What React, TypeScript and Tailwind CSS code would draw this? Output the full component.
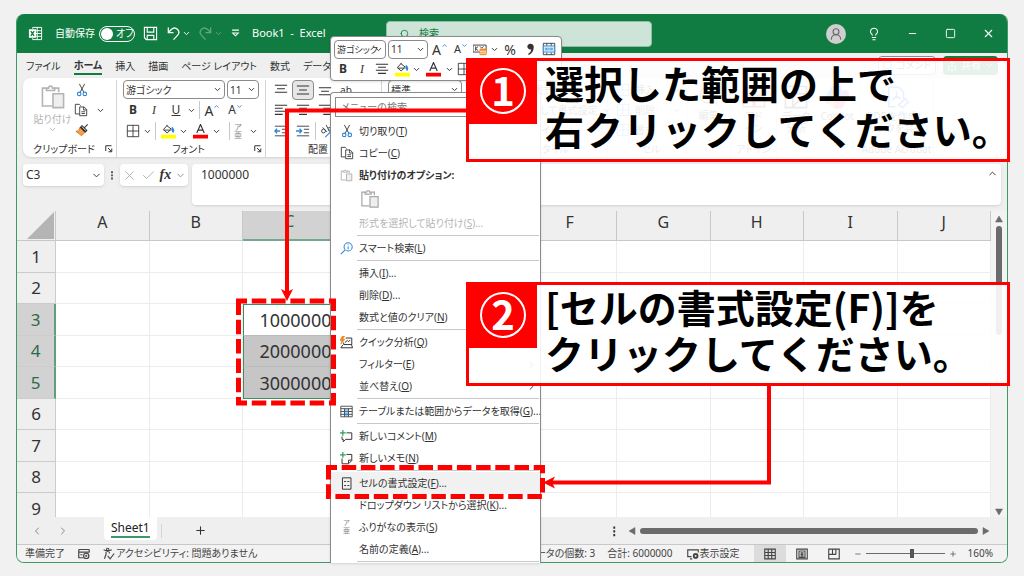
import type { ReactNode } from "react";
import {
  Check,
  ChevronDown,
  ChevronLeft,
  ChevronRight,
  ChevronUp,
  Lightbulb,
  MessageSquare,
  Minus,
  Plus,
  Search,
  Share,
  Square,
  UserRound,
  X,
} from "lucide-react";

const COLUMNS = ["A", "B", "C", "D", "E", "F", "G", "H", "I", "J"];
const ROWS = [1, 2, 3, 4, 5, 6, 7, 8, 9];
const VALUES: Record<number, string> = { 3: "1000000", 4: "2000000", 5: "3000000" };
const TABS = ["ファイル", "ホーム", "挿入", "描画", "ページ レイアウト", "数式", "データ"];

interface SvgProps {
  children: ReactNode;
  className?: string;
}

function Svg({ children, className = "size-4" }: SvgProps) {
  return (
    <svg viewBox="0 0 16 16" fill="none" stroke="currentColor" className={`shrink-0 ${className}`} aria-hidden="true">
      {children}
    </svg>
  );
}

const ExcelIcon = () => (
  <Svg className="size-[15px]">
    <path d="M5 3V1.5h9.5v13H5V13M9.8 1.5v13M5 5h9.500M5 8h9.500M5 11h9.500" />
    <path d="M1 3.500h7.500v9H1z" fill="#fff" stroke="none" />
    <path d="M3 5.500l3.500 5M6.500 5.500L3 10.500" stroke="#107c41" strokeWidth="1.500" />
  </Svg>
);

const SaveIcon = () => (
  <Svg className="size-[15px]">
    <path d="M1.500 1.500h13v13h-11l-2-2zM4.500 1.500v5h7v-5M4.500 14.500V10h7v4.500" strokeWidth="1.200" />
  </Svg>
);

const UndoIcon = ({ className = "" }: { className?: string }) => (
  <Svg className={`size-[15px] ${className}`}>
    <path d="M2.500 1.500v5.500H8M2.500 7l3.500-3.500a4.500 4.500 0 0 1 6.500 6.200L8 14.500" strokeWidth="1.400" />
  </Svg>
);

const ScissorsIcon = () => (
  <Svg className="size-[14px]">
    <path d="M5 1l5 9.500M11 1L6 10.500" />
    <g stroke="#2b88d8" strokeWidth="1.300">
      <circle cx="4.800" cy="12.500" r="2" />
      <circle cx="11.200" cy="12.500" r="2" />
    </g>
  </Svg>
);

const CopyIcon = () => (
  <Svg className="size-[14px]">
    <path d="M6 12.500H1.500v-11H6l1.500 1.500" />
    <path d="M6.500 4.500h5l3 3v7h-8zM11 4.500V8h3.500M8.500 10h4M8.500 12h4" />
  </Svg>
);

function PasteIcon({ className = "size-4" }: { className?: string }) {
  return (
    <Svg className={className}>
      <path d="M7.500 13.500h-6v-11H4M9 2.500h2.500V5" />
      <path d="M4 4V2.500h1.300a1.200 1.200 0 0 1 2.400 0H9V4z" />
      <path d="M8 6h6.500v8.500H8z" fill="#efefef" />
    </Svg>
  );
}

const BrushIcon = () => (
  <Svg className="size-[14px]">
    <path d="M14.500 1.500L10.500 5.500M6.500 4l6 6M8 3l5.500 5.500-2 2L6 5z" strokeWidth="1.200" />
    <path d="M5.500 5.500L11 11l-3.500 3.500L1 9.500l3-.5z" fill="#f5a04c" stroke="#d8731c" />
  </Svg>
);

const BordersIcon = () => (
  <Svg className="size-[14px]">
    <path d="M1.500 1.500h13v13h-13zM8 1.500v13M1.500 8h13" />
  </Svg>
);

const FillIcon = () => (
  <Svg className="size-[15px]">
    <path d="M7 1L2.500 6l4 3.500L11 5.500 6 1.500M3 6.500h7" />
    <path d="M12 3.500q3 3 1 5.500-2-1 -1-5.500z" fill="#2b88d8" stroke="#2b88d8" />
    <path d="M0 11.500h16v4H0z" fill="#ffff00" stroke="none" />
  </Svg>
);

const FontColorIcon = () => (
  <Svg className="size-[15px]">
    <path d="M4 9.500l4-9 4 9M5.300 6.500h5.400" strokeWidth="1.200" />
    <path d="M0 11.500h16v4H0z" fill="#ff0000" stroke="none" />
  </Svg>
);

const LauncherIcon = () => (
  <Svg className="size-[8px]">
    <path d="M1.500 12V1.500H13M6 6l7 7M13.500 7v6.500H7" strokeWidth="2" />
  </Svg>
);

function AlignIcon({ d }: { d: string }) {
  return (
    <Svg className="size-[14px]">
      <path d={d} strokeWidth="1.200" />
    </Svg>
  );
}

function IndentIcon({ flip = false }: { flip?: boolean }) {
  return (
    <Svg className="size-[14px]">
      <path d="M1 2.500h14M9 6h6M9 10h6M1 13.500h14" />
      <path d={flip ? "M0 8h6M4 5.500L6.500 8 4 10.500" : "M1 8h6M3.500 5.500L1 8l2.500 2.500"} stroke="#2b88d8" strokeWidth="1.500" />
    </Svg>
  );
}

const OrientationIcon = () => (
  <Svg className="size-[14px]">
    <circle cx="4" cy="8" r="2.200" />
    <path d="M3 4l5 5M7 1l3.500 7M9 5a2 2 0 1 1 1 3" />
    <path d="M6 15l8-8M14 11V7h-4" stroke="#2b88d8" strokeWidth="1.300" />
  </Svg>
);

const PhoneticIcon = ({ className = "text-[8px]" }: { className?: string }) => (
  <span className={`flex flex-col items-center leading-[8px] text-[#8a8a8a] ${className}`}>
    <span>ア</span>
    <span>亜</span>
  </span>
);

const CurrencyIcon = () => (
  <Svg className="size-[14px]">
    <path d="M0 3.500h15v8H0zM3 5v5M3 7.500L6 5M3 7.500L6 10M8 5l2 2 2-2" />
    <path d="M8 8h7v6.500H8z" fill="#f08a24" stroke="#f08a24" />
    <path d="M8 10.500h7M8 12.700h7" stroke="#fff" />
  </Svg>
);

const MergeIcon = () => (
  <Svg className="size-[14px]">
    <path d="M1.500 1.500h13v13h-13zM5.500 1.500v3M10.500 1.500v3M5.500 12v2.500M10.500 12v2.500" />
    <path d="M1.500 4.500h13v7h-13z" fill="#cfe7fa" stroke="#2b88d8" />
    <path d="M4 8h8M5.500 6.500L4 8l1.500 1.500M10.500 6.500L12 8l-1.500 1.500" stroke="#2b88d8" />
  </Svg>
);

const SmartIcon = () => (
  <Svg className="size-[13px]">
    <g stroke="#2b88d8" strokeWidth="1.300">
      <circle cx="10" cy="6" r="5" />
      <path d="M6 10l-5 5M10 5.500V9M10 3v1" />
    </g>
  </Svg>
);

const QuickIcon = () => (
  <Svg className="size-[13px]">
    <path d="M7 2.500h7.500v8H4.500V8M3.500 11L1 14.500h14.500l-1.500-4M6 8l3-2.500 1.500 1.500 2-2" strokeWidth="1.200" />
    <path d="M3 0L0 5.500h2.500L1 10l5-6H3.500L5.500 0z" fill="#f08a24" stroke="#f08a24" />
  </Svg>
);

const TableIcon = () => (
  <Svg className="size-[13px]">
    <path d="M5.500 5h5v9h-5z" fill="#9fd0f5" stroke="none" />
    <path d="M1 1.500h14v13H1zM1 4.500h14M1 8h14M1 11.500h14M5.500 4.500v10M10.500 4.500v10" />
    <path d="M5.500 8h5M5.500 11.500h5" stroke="#2b88d8" />
  </Svg>
);

const NewCommentIcon = () => (
  <Svg className="size-[13px]">
    <path d="M8 3.500h6.500v8H7l-3 3v-3H2.500V8" strokeWidth="1.200" />
    <path d="M3.500 0v7M0 3.500h7" stroke="#2e9e5b" strokeWidth="1.500" />
  </Svg>
);

const NewNoteIcon = () => (
  <Svg className="size-[13px]">
    <path d="M8 3h6.500v7.500l-4 4H2.500V8M10.500 14v-4h4" strokeWidth="1.200" />
    <path d="M3.500 0v7M0 3.500h7" stroke="#2e9e5b" strokeWidth="1.500" />
  </Svg>
);

const FormatCellsIcon = () => (
  <Svg className="size-[13px]">
    <path d="M3 1h10.500v14H3zM5 5.500h2.500M9 5.500h2.500M5 10.500h2.500M9 10.500h2.500" strokeWidth="1.200" />
  </Svg>
);

const Caret = () => <ChevronDown className="size-[9px] shrink-0" strokeWidth={2.5} aria-hidden="true" />;

interface ToolProps {
  label: string;
  children: ReactNode;
  className?: string;
}

function Tool({ label, children, className = "w-5" }: ToolProps) {
  return (
    <button aria-label={label} className={`flex h-5 shrink-0 items-center justify-center ${className}`}>
      {children}
    </button>
  );
}

function Dropdown({ label, value, className }: { label: string; value: string; className: string }) {
  return (
    <div className={`relative h-[19px] shrink-0 ${className}`}>
      <select
        aria-label={label}
        className="block size-full appearance-none rounded border border-[#8a8a8a] bg-white px-[2px] leading-none"
      >
        <option>{value}</option>
      </select>
      <span className="pointer-events-none absolute top-[5px] right-[3px]">
        <Caret />
      </span>
    </div>
  );
}

interface GroupProps {
  title: string;
  className: string;
  launcher?: boolean;
  children: ReactNode;
}

function Group({ title, className, launcher, children }: GroupProps) {
  return (
    <section className={`flex shrink-0 flex-col border-r border-[#d4d4d4] ${className}`} aria-label={title}>
      <div className="h-[62px]">{children}</div>
      <div className="flex h-[14px] items-center">
        <h2 className="flex-1 text-center text-[10px] leading-[14px]">{title}</h2>
        {launcher && (
          <button aria-label={`${title}の設定`} className="mr-[3px]">
            <LauncherIcon />
          </button>
        )}
      </div>
    </section>
  );
}

const Split = ({ className = "mx-px" }: { className?: string }) => (
  <span className={`h-[18px] w-px shrink-0 bg-[#c8c8c8] ${className}`} />
);

function TitleBar() {
  return (
    <header className="flex h-[39px] shrink-0 items-center bg-[#107c41] text-white">
      <div className="flex w-[369px] shrink-0 items-center pl-[11px]">
        <ExcelIcon />
        <span className="ml-3 text-[10px]">自動保存</span>
        <button
          role="switch"
          aria-checked="false"
          aria-label="自動保存"
          className="ml-1 flex h-4 w-9 items-center gap-[3px] rounded-full border border-white pl-px text-[10px] whitespace-nowrap"
        >
          <span className="size-3 shrink-0 rounded-full bg-white" />
          オフ
        </button>
        <button aria-label="上書き保存" className="ml-2">
          <SaveIcon />
        </button>
        <button aria-label="元に戻す" className="ml-2 flex items-center gap-px">
          <UndoIcon />
          <Caret />
        </button>
        <button aria-label="やり直し" className="ml-[7px] flex items-center gap-px text-[#5fa880]">
          <UndoIcon className="-scale-x-100" />
          <Caret />
        </button>
        <button aria-label="クイック アクセス ツール バー" className="ml-2">
          <Svg className="size-[9px]">
            <path d="M2 2h12M3 7h10l-5 5z" strokeWidth="1.800" />
          </Svg>
        </button>
        <h1 className="ml-3 text-[11px] whitespace-pre">Book1  -  Excel</h1>
      </div>
      <label className="flex h-[26px] w-[266px] shrink-0 items-center gap-[10px] rounded border border-[#8fbfa5] bg-[#cfe4d9] pl-3 text-[#107c41]">
        <Search className="size-[10px] -scale-x-100" />
        <input
          type="search"
          aria-label="検索"
          placeholder="検索"
          className="min-w-0 flex-1 bg-transparent text-[10px] outline-none placeholder:text-[#107c41]"
        />
      </label>
      <div className="ml-auto flex">
        <Tool label="アカウント" className="w-[38px]">
          <span className="flex size-5 items-center justify-center rounded-full bg-[#cfcfcf] text-[#6b6b6b]">
            <UserRound className="size-[14px]" strokeWidth={2} />
          </span>
        </Tool>
        <Tool label="ヒント" className="w-[38px]">
          <Lightbulb className="size-[14px]" strokeWidth={1.8} />
        </Tool>
        <Tool label="最小化" className="w-[38px]">
          <Minus className="size-[11px]" />
        </Tool>
        <Tool label="最大化" className="w-[38px]">
          <Square className="size-[11px]" />
        </Tool>
        <Tool label="閉じる" className="w-[38px]">
          <X className="size-[13px]" />
        </Tool>
      </div>
    </header>
  );
}

function RibbonTabs() {
  return (
    <div className="flex h-[25px] shrink-0 items-center pr-[9px] pl-[9px]">
      <nav className="flex h-full flex-1 gap-[13px]">
        {TABS.map((tab) => (
          <button
            key={tab}
            className={`mt-1 h-[18px] text-[10px] leading-[16px] whitespace-nowrap ${
              tab === "ホーム" ? "border-b-2 border-[#107c41] font-bold" : ""
            }`}
          >
            {tab}
          </button>
        ))}
      </nav>
      <button className="flex h-[19px] items-center gap-1 rounded border border-[#8a8a8a] bg-white px-1 text-[10px]">
        <MessageSquare className="size-[9px]" />
        コメント
      </button>
      <button className="ml-[7px] flex h-[19px] items-center gap-1 rounded bg-[#107c41] px-1 text-[10px] text-white">
        <Share className="size-[10px]" />
        共有
        <Caret />
      </button>
    </div>
  );
}

function Ribbon() {
  return (
    <div className="mx-[6px] flex h-[79px] shrink-0 overflow-hidden rounded-lg bg-white pt-[2px] shadow-sm">
      <Group title="クリップボード" className="w-[94px]" launcher>
        <div className="flex">
          <button className="flex w-[51px] flex-col items-center pt-1 pl-2 text-[10px] leading-3 text-[#b5b5b5]">
            <PasteIcon className="size-[26px]" />
            <span className="mt-[3px] whitespace-nowrap">貼り付け</span>
            <Caret />
          </button>
          <div className="flex flex-col">
            <Tool label="切り取り" className="w-4">
              <ScissorsIcon />
            </Tool>
            <button aria-label="コピー" className="flex h-5 items-center gap-2">
              <CopyIcon />
              <Caret />
            </button>
            <Tool label="書式のコピー" className="w-4">
              <BrushIcon />
            </Tool>
          </div>
        </div>
      </Group>

      <Group title="フォント" className="w-[149px] pl-[6px]" launcher>
        <div className="flex h-5 gap-[2px] text-[10px]">
          <Dropdown label="フォント名" value="游ゴシック" className="w-[102px]" />
          <Dropdown label="サイズ" value="11" className="w-8" />
        </div>
        <div className="flex h-5 items-center">
          <Tool label="太字">
            <b className="text-[12px]">B</b>
          </Tool>
          <Tool label="斜体" className="w-[22px]">
            <i className="font-['Liberation_Serif',serif] text-[12px]">I</i>
          </Tool>
          <Tool label="下線" className="w-[22px]">
            <u className="text-[12px]">U</u>
          </Tool>
          <Caret />
          <Split className="ml-[3px] mr-px" />
          <Tool label="拡大" className="w-[23px]">
            <span className="text-[14px]">A</span>
            <ChevronUp className="mb-2 size-[7px] text-[#2b88d8]" strokeWidth={3} />
          </Tool>
          <Tool label="縮小" className="w-[23px]">
            <span className="text-[12px]">A</span>
            <ChevronDown className="mb-2 size-[7px] text-[#2b88d8]" strokeWidth={3} />
          </Tool>
        </div>
        <div className="flex h-[22px] items-center">
          <Tool label="罫線">
            <BordersIcon />
          </Tool>
          <Caret />
          <Split className="ml-[3px] mr-px" />
          <Tool label="塗りつぶし" className="w-[22px]">
            <FillIcon />
          </Tool>
          <Caret />
          <Tool label="文字色" className="w-6">
            <FontColorIcon />
          </Tool>
          <Caret />
          <Split className="ml-2 mr-px" />
          <Tool label="ふりがな" className="w-[14px]">
            <PhoneticIcon />
          </Tool>
          <span className="ml-1">
            <Caret />
          </span>
        </div>
      </Group>

      <Group title="配置" className="w-[116px] px-1" launcher>
        <div className="flex h-5 items-center">
          <Tool label="上揃え" className="w-[22px]">
            <AlignIcon d="M1 2.500h14M3.500 6.500h9M1 10.500h14" />
          </Tool>
          <Tool label="上下中央" className="w-[22px] rounded border border-[#8a8a8a] bg-[#e6e6e6]">
            <AlignIcon d="M1 3.500h14M3.500 8h9M1 12.500h14" />
          </Tool>
          <Tool label="下揃え" className="w-[22px]">
            <AlignIcon d="M1 5.500h14M3.500 9.500h9M1 13.500h14" />
          </Tool>
          <Tool label="折り返し" className="w-5">
            <span className="text-[10px]">ab</span>
          </Tool>
        </div>
        <div className="flex h-5 items-center">
          <Tool label="左揃え" className="w-[22px]">
            <AlignIcon d="M1 2.500h14M1 6h9M1 9.500h14M1 13h9" />
          </Tool>
          <Tool label="中央揃え" className="w-[22px]">
            <AlignIcon d="M1 2.500h14M3.500 6h9M1 9.500h14M3.500 13h9" />
          </Tool>
          <Tool label="右揃え" className="w-[22px]">
            <AlignIcon d="M1 2.500h14M6 6h9M1 9.500h14M6 13h9" />
          </Tool>
        </div>
        <div className="flex h-[22px] items-center">
          <Tool label="インデントを減らす" className="w-[22px]">
            <IndentIcon />
          </Tool>
          <Tool label="インデントを増やす" className="w-[22px]">
            <IndentIcon flip />
          </Tool>
          <Split />
          <Tool label="方向">
            <OrientationIcon />
          </Tool>
        </div>
      </Group>

      <Group title="数値" className="w-[101px] px-[6px] text-[10px]">
        <Dropdown label="表示形式" value="標準" className="w-[74px]" />
      </Group>

      <Group title="スタイル" className="w-[125px] pl-3 text-[10px]">
        <p className="leading-5">条件付き書式</p>
        <p className="flex items-center gap-1 leading-5 whitespace-nowrap">
          テーブルとして書式設定
          <Caret />
        </p>
        <p className="leading-5">セルのスタイル</p>
      </Group>

      <Group title="セル" className="w-[79px] pl-2 text-[10px]">
        {["挿入", "削除", "書式"].map((name) => (
          <button key={name} className="flex h-5 items-center gap-[5px]">
            <span className="text-[#2b88d8]">
              <BordersIcon />
            </span>
            {name}
            <span className="ml-3">
              <Caret />
            </span>
          </button>
        ))}
      </Group>

      <Group title="" className="w-11 text-[10px]">
        <button className="flex w-full flex-col items-center pt-1">
          <Search className="size-6" strokeWidth={1} />
          編集
        </button>
      </Group>
      <Group title="アドイン" className="w-[46px] text-[10px]">
        <button className="flex w-full flex-col items-center pt-1 leading-3">
          <Svg className="size-[26px] text-[#d83b01]">
            <path d="M1.500 2h6v5h-6zM8.500 2h6v5h-6zM1.500 8h6v6h-6zM8.500 8h6v6h-6z" />
          </Svg>
          アド
          <br />
          イン
        </button>
      </Group>
      <Group title="" className="w-[83px] text-[10px]">
        <div className="flex justify-around pt-1 leading-3">
          <button className="flex flex-col items-center">
            <Svg className="size-[26px]">
              <path d="M1.500 1.500h13v13h-13zM6 1.500v13M1.500 6h13M6 14l8-8" />
            </Svg>
            データ
            <br />
            分析
          </button>
          <button className="flex flex-col items-center">
            <svg viewBox="0 0 16 16" className="size-[26px]" aria-hidden="true">
              <path d="M5 1h5l2 5H6L4 12H2Q0 12 1 8z" fill="#1f8ff0" />
              <path d="M11 15H6l-2-5h6l2-6h2q2 0 1 4z" fill="#e8548c" />
              <path d="M10 4h4q2 0 1 4l-2 2-3-1z" fill="#9a5be8" />
              <path d="M2 8h4l1 6H6Q3 14 2 8z" fill="#f0b429" />
            </svg>
            Copilot
          </button>
        </div>
      </Group>
      <Group title="Adobe Acrobat" className="w-[74px] text-[10px] whitespace-nowrap">
        <button className="flex w-full flex-col items-center pt-1 leading-3">
          <Svg className="size-[26px] text-[#2f6fe4]">
            <path d="M7 14H3V2h6l3 3v4M5 10q4-3 2.500-5.500M5.500 9.500Q8 7 10 9M9 13l4-4 2 2-3.500 3.500z" />
          </Svg>
          PDF を作成し
          <br />
          リンクを共有
        </button>
      </Group>
      <button aria-label="リボンを折りたたむ" className="mt-auto mr-3 mb-[5px] ml-auto">
        <ChevronUp className="size-[10px]" />
      </button>
    </div>
  );
}

function FormulaBar() {
  return (
    <div className="flex shrink-0 items-start px-[6px] pt-[7px] pb-[6px]">
      <div className="flex h-[22px] w-[81px] items-center rounded bg-white pr-[2px] shadow-sm">
        <input aria-label="名前ボックス" defaultValue="C3" className="w-0 flex-1 pl-[3px] text-[12px] outline-none" />
        <ChevronDown className="size-[11px]" />
      </div>
      <Svg className="mx-[3px] mt-1 h-[14px] w-[10px]">
        <path d="M8 2v3M8 7v3M8 12v3" strokeWidth="2.500" />
      </Svg>
      <div className="flex h-[22px] w-[68px] items-center justify-around rounded bg-white shadow-sm">
        <X className="size-[15px] text-[#b0b0b0]" strokeWidth={1.5} />
        <Check className="size-[15px] text-[#b0b0b0]" strokeWidth={1.5} />
        <i className="font-['Liberation_Serif',serif] text-[14px] leading-none font-bold">fx</i>
        <ChevronDown className="size-[11px] text-[#8a8a8a]" />
      </div>
      <div className="ml-1 flex h-[41px] flex-1 rounded bg-white shadow-sm">
        <textarea
          aria-label="数式バー"
          defaultValue="1000000"
          className="flex-1 resize-none px-[9px] pt-[2px] text-[12px] leading-[18px] outline-none"
        />
        <ChevronUp className="mt-1 mr-[3px] size-[11px]" />
      </div>
    </div>
  );
}

function Sheet() {
  return (
    <div className="flex min-h-0 flex-1 basis-0 overflow-hidden">
      <div className="flex-1 overflow-hidden">
        <table className="w-full table-fixed border-separate border-spacing-0 bg-white text-[17px]">
          <thead>
            <tr className="h-[30px] bg-[#efefef]">
              <th className="w-[39px] border-r border-b border-[#c8c8c8] p-0">
                <svg viewBox="0 0 28 28" className="ml-auto size-[28px]" aria-hidden="true">
                  <path d="M27 0v27H0z" fill="#b4b4b4" />
                </svg>
              </th>
              {COLUMNS.map((col) => (
                <th
                  key={col}
                  className={`border-r p-0 pb-2 text-[16px] leading-5 font-normal ${
                    col === "C"
                      ? "border-r-[#c8c8c8] border-b-2 border-b-[#72a98a] bg-[#d2d2d2] text-[#2b6b48]"
                      : "border-b border-[#c8c8c8]"
                  }`}
                >
                  {col}
                </th>
              ))}
            </tr>
          </thead>
          <tbody>
            {ROWS.map((row) => {
              const selected = row in VALUES;
              return (
                <tr key={row} className={row % 2 === 0 ? "h-[31px]" : "h-8"}>
                  <th
                    className={`border-b border-[#cccccc] p-0 text-center leading-[30px] font-normal ${
                      selected
                        ? "border-r-2 border-r-[#5f9f7c] bg-[#d2d2d2] text-[#2b6b48]"
                        : "border-r border-r-[#cccccc] bg-[#efefef]"
                    }`}
                  >
                    {row}
                  </th>
                  {COLUMNS.map((col) => (
                    <td
                      key={col}
                      className={`border-r border-b p-0 pr-1 text-right text-[18px] leading-[28px] ${
                        col === "C" && selected
                          ? `border-l border-l-[#3c8d62] ${row === 3 ? "border-t border-t-[#3c8d62] bg-white" : "bg-[#c6c6c6]"} ${
                              row === 5 ? "border-b-[#3c8d62]" : "border-b-[#bbbbbb]"
                            }`
                          : "border-[#ececec]"
                      }`}
                    >
                      {col === "C" ? VALUES[row] : ""}
                    </td>
                  ))}
                </tr>
              );
            })}
          </tbody>
        </table>
      </div>
      <div className="flex w-4 shrink-0 flex-col items-center gap-[3px] bg-[#f3f3f3] pt-1 text-[#6b6b6b]">
        <Svg className="size-2">
          <path d="M8 2l7 12H1z" fill="currentColor" />
        </Svg>
        <span className="h-[109px] w-[6px] rounded-full bg-[#6b6b6b]" />
        <span className="mt-auto mb-[1px]">
          <Svg className="size-2">
            <path d="M8 14l7-12H1z" fill="currentColor" />
          </Svg>
        </span>
      </div>
    </div>
  );
}

function SheetTabs() {
  return (
    <div className="flex h-[27px] shrink-0 items-center pl-[14px] text-[#8a8a8a]">
      <button aria-label="前のシート">
        <ChevronLeft className="size-3" />
      </button>
      <button aria-label="次のシート" className="ml-[14px]">
        <ChevronRight className="size-3" />
      </button>
      <button className="mb-1 ml-[35px] h-[23px] rounded-b bg-white px-[7px] text-[#222222]">
        <span className="block border-b-2 border-[#3c9a66] text-[12px] leading-[17px]">Sheet1</span>
      </button>
      <span className="ml-1 h-[14px] w-px bg-[#d4d4d4]" />
      <button aria-label="新しいシート" className="ml-8 text-[#333333]">
        <Plus className="size-[13px]" />
      </button>
      <div className="ml-auto flex w-[395px] items-center gap-1 pr-[17px] text-[#6b6b6b]">
        <Svg className="size-3 text-[#333333]">
          <path d="M3 2v3M3 7v3M3 12v3" strokeWidth="2.500" />
        </Svg>
        <Svg className="size-2">
          <path d="M14 1v14L2 8z" fill="currentColor" />
        </Svg>
        <span className="h-[6px] flex-1 rounded-full bg-[#6b6b6b]" />
        <Svg className="size-2">
          <path d="M2 1v14l12-7z" fill="currentColor" />
        </Svg>
      </div>
    </div>
  );
}

function StatusBar() {
  return (
    <footer className="flex h-[18px] shrink-0 items-center border-t border-[#c8c8c8] bg-[#f3f3f3] pr-[14px] pl-2 text-[10px] whitespace-nowrap text-[#444444]">
      <span>準備完了</span>
      <Svg className="ml-[13px] size-3">
        <path d="M1 2h14M1 2v11h6M15 2v4M1 5.500h14M3 9h3" strokeWidth="1.600" />
        <circle cx="11" cy="10.500" r="3.500" strokeWidth="1.600" />
        <circle cx="11" cy="10.500" r="1" fill="currentColor" />
      </Svg>
      <Svg className="mr-px ml-3 size-[13px]">
        <path d="M7 1.500a1.500 1.500 0 1 1 0 3 1.500 1.500 0 0 1 0-3M2 3.500l5 2 5-2M5 6v3l-2 5.500M9 6v2M7 11l3 3.500L15 8" strokeWidth="1.400" />
      </Svg>
      <span>アクセシビリティ: 問題ありません</span>
      <div className="ml-auto flex h-full items-center">
        <span>データの個数: 3</span>
        <span className="ml-3">合計: 6000000</span>
        <button className="ml-[14px] flex items-center gap-px">
          <Svg className="size-3">
            <path d="M6 11.500H1v-9h14V6M4 14.500h3" strokeWidth="1.500" />
            <circle cx="11.500" cy="10.500" r="2.500" strokeWidth="2.500" />
          </Svg>
          表示設定
        </button>
        <button aria-label="標準" className="ml-[14px] flex h-full w-8 items-center justify-center bg-[#dcdcdc]">
          <Svg className="size-3">
            <path d="M1 1.500h14v13H1zM5.600 1.500v13M10.300 1.500v13M1 6h14M1 10h14" strokeWidth="1.500" />
          </Svg>
        </button>
        <button aria-label="ページ レイアウト" className="flex w-8 justify-center">
          <Svg className="size-3">
            <path d="M1 1.500h14v13H1zM4 4h8v8.500H4zM6 6.500h4M6 8.500h4M6 10.500h4" strokeWidth="1.500" />
          </Svg>
        </button>
        <button aria-label="改ページ プレビュー" className="flex w-8 justify-center">
          <Svg className="size-3">
            <path d="M1 1.500h14v13H1zM6 1.500v7M10.500 1.500v7M1 8.500h9.500" strokeWidth="1.500" />
          </Svg>
        </button>
        <button aria-label="縮小" className="ml-1">
          <Minus className="size-2" />
        </button>
        <input
          type="range"
          aria-label="ズーム"
          min={10}
          max={240}
          defaultValue={145}
          className="mx-1 h-px w-[79px] appearance-none bg-[#6b6b6b] [&::-webkit-slider-thumb]:h-[9px] [&::-webkit-slider-thumb]:w-1 [&::-webkit-slider-thumb]:appearance-none [&::-webkit-slider-thumb]:bg-[#555555]"
        />
        <button aria-label="拡大">
          <Plus className="size-2" />
        </button>
        <span className="ml-[11px]">160%</span>
      </div>
    </footer>
  );
}

function MiniToolbar() {
  return (
    <div className="absolute top-[36px] left-[330px] flex h-[45px] w-[232px] flex-col rounded border border-[#8a8a8a] bg-white pt-[2px] pl-[3px] shadow">
      <div className="flex h-5 items-center gap-[2px]">
        <Dropdown label="フォント名" value="游ゴシック" className="w-[52px] text-[9px]" />
        <Dropdown label="サイズ" value="11" className="w-10 text-[10px]" />
        <Tool label="拡大">
          <span className="text-[14px]">A</span>
          <ChevronUp className="mb-2 size-[7px] text-[#2b88d8]" strokeWidth={3} />
        </Tool>
        <Tool label="縮小" className="w-[18px]">
          <span className="text-[11px]">A</span>
          <ChevronDown className="mb-2 size-[7px] text-[#2b88d8]" strokeWidth={3} />
        </Tool>
        <Tool label="通貨" className="w-4">
          <CurrencyIcon />
        </Tool>
        <Caret />
        <Tool label="パーセント" className="w-[18px]">
          <span className="text-[14px]">%</span>
        </Tool>
        <Tool label="桁区切り" className="w-[18px]">
          <Svg className="size-[13px]">
            <path d="M8 1a3.500 3.500 0 1 0 1 6.700Q9 11 5.500 13v2Q12 12 12 5 11.500 1 8 1z" fill="currentColor" stroke="none" />
          </Svg>
        </Tool>
        <Tool label="結合" className="w-4">
          <MergeIcon />
        </Tool>
      </div>
      <div className="flex h-5 items-center">
        <Tool label="太字" className="w-[18px]">
          <b className="text-[12px]">B</b>
        </Tool>
        <Tool label="斜体">
          <i className="font-['Liberation_Serif',serif] text-[12px]">I</i>
        </Tool>
        <Tool label="中央揃え">
          <AlignIcon d="M1 2.500h14M3.500 6h9M1 9.500h14M3.500 13h9" />
        </Tool>
        <Tool label="塗りつぶし">
          <FillIcon />
        </Tool>
        <Caret />
        <Tool label="文字色" className="w-6">
          <FontColorIcon />
        </Tool>
        <Caret />
        <Tool label="罫線">
          <BordersIcon />
        </Tool>
      </div>
    </div>
  );
}

interface MenuRowProps {
  text: string;
  hotkey?: string;
  dots?: boolean;
  icon?: ReactNode;
  submenu?: boolean;
  className?: string;
}

function MenuRow({ text, hotkey, dots, icon, submenu, className = "" }: MenuRowProps) {
  return (
    <button role="menuitem" className={`flex h-[22px] w-full shrink-0 items-center text-left ${className}`}>
      <span className="flex w-7 shrink-0 items-center pl-[9px]">{icon}</span>
      <span className="whitespace-nowrap">
        {text}
        {hotkey && (
          <>
            (<u>{hotkey}</u>)
          </>
        )}
        {dots && "..."}
      </span>
      {submenu && <ChevronRight className="mr-[3px] ml-auto size-[11px]" />}
    </button>
  );
}

const Divider = () => <hr className="my-px mr-px ml-[26px] shrink-0 border-[#c8c8c8]" />;

function ContextMenu() {
  return (
    <div
      role="menu"
      className="absolute top-[92px] bottom-[13px] left-[330px] flex w-[211px] flex-col overflow-hidden rounded-t border border-b-0 border-[#8a8a8a] bg-white pt-1 text-[10px] shadow"
    >
      <input
        type="search"
        aria-label="メニューの検索"
        placeholder="メニューの検索"
        className="mx-1 mb-[3px] h-5 shrink-0 border border-[#8a8a8a] px-[5px] text-[10px] outline-none placeholder:text-[#777777]"
      />
      <MenuRow text="切り取り" hotkey="T" icon={<ScissorsIcon />} />
      <MenuRow text="コピー" hotkey="C" icon={<CopyIcon />} />
      <MenuRow
        text="貼り付けのオプション:"
        className="font-bold"
        icon={
          <span className="text-[#a8a8a8]">
            <PasteIcon className="size-[13px]" />
          </span>
        }
      />
      <button aria-label="貼り付け" className="flex h-[26px] shrink-0 items-center pl-[29px] text-[#a8a8a8]">
        <PasteIcon className="size-5" />
      </button>
      <MenuRow text="形式を選択して貼り付け" hotkey="S" dots className="text-[#b5b5b5]" />
      <Divider />
      <MenuRow text="スマート検索" hotkey="L" icon={<SmartIcon />} />
      <Divider />
      <MenuRow text="挿入" hotkey="I" dots />
      <MenuRow text="削除" hotkey="D" dots />
      <MenuRow text="数式と値のクリア" hotkey="N" />
      <Divider />
      <MenuRow text="クイック分析" hotkey="Q" icon={<QuickIcon />} />
      <MenuRow text="フィルター" hotkey="E" submenu />
      <MenuRow text="並べ替え" hotkey="O" submenu />
      <Divider />
      <MenuRow text="テーブルまたは範囲からデータを取得" hotkey="G" dots icon={<TableIcon />} />
      <Divider />
      <MenuRow text="新しいコメント" hotkey="M" icon={<NewCommentIcon />} />
      <MenuRow text="新しいメモ" hotkey="N" icon={<NewNoteIcon />} />
      <Divider />
      <MenuRow text="セルの書式設定" hotkey="F" dots icon={<FormatCellsIcon />} className="bg-[#f1f1f1]" />
      <MenuRow text="ドロップダウン リストから選択" hotkey="K" dots />
      <MenuRow text="ふりがなの表示" hotkey="S" icon={<PhoneticIcon className="ml-[3px] text-[7px]" />} />
      <MenuRow text="名前の定義" hotkey="A" dots />
      <Divider />
    </div>
  );
}

// Red dashed frames and the arrows that tie them to the step boxes
function Annotations() {
  return (
    <svg className="pointer-events-none absolute inset-0 size-full" fill="none" stroke="#ff0000" aria-hidden="true">
      <rect x="238.500" y="301" width="95" height="102" strokeWidth="5" strokeDasharray="14.500 4.800" strokeDashoffset="6" />
      <rect x="328.500" y="467.500" width="214" height="29" strokeWidth="5" strokeDasharray="14.500 4.700" strokeDashoffset="6" />
      <path d="M467 110.500H287V294" strokeWidth="4" />
      <path d="M281 289l6 12 6-12-6 3z" fill="#ff0000" stroke="none" />
      <path d="M769 384v98.500H551" strokeWidth="4" />
      <path d="M543 482.500l12-6-3 6 3 6z" fill="#ff0000" stroke="none" />
    </svg>
  );
}

interface CalloutProps {
  step: number;
  lines: string[];
  className: string;
}

function Callout({ step, lines, className }: CalloutProps) {
  return (
    <aside className={`absolute right-[14px] left-[466px] flex h-[104px] border-[3px] border-[#ff0000] bg-white/90 ${className}`}>
      <div className="flex h-[63px] w-[68px] shrink-0 items-center justify-center bg-[#ff0000]">
        <span className="mb-1 flex size-[46px] items-center justify-center rounded-full border-2 border-white pb-1 font-['Noto_Sans_CJK_JP',sans-serif] text-[40px] leading-none font-bold text-white">
          {step}
        </span>
      </div>
      <p className="-mt-0.5 pl-2 font-['Noto_Sans_CJK_JP',sans-serif] text-[39px] leading-[46px] font-bold whitespace-nowrap text-black">
        {lines[0]}
        <br />
        {lines[1]}
      </p>
    </aside>
  );
}

export default function App() {
  return (
    <div className="relative flex h-screen min-h-[480px] flex-col overflow-hidden bg-[#f1f1f1] px-4 pt-[14px] pb-[13px] font-['Noto_Sans','Noto_Sans_CJK_JP',sans-serif] text-[#333333]">
      <main className="flex min-h-0 flex-1 flex-col overflow-hidden rounded-lg border border-t-0 border-[#3c9a66] bg-[#efefef] [font-feature-settings:'palt']">
        <TitleBar />
        <RibbonTabs />
        <Ribbon />
        <FormulaBar />
        <Sheet />
        <SheetTabs />
        <StatusBar />
      </main>
      <div className="[font-feature-settings:'palt']">
        <ContextMenu />
        <MiniToolbar />
      </div>
      <Callout step={1} lines={["選択した範囲の上で", "右クリックしてください。"]} className="top-[58px]" />
      <Callout step={2} lines={["[セルの書式設定(F)]を", "クリックしてください。"]} className="top-[282px]" />
      <Annotations />
    </div>
  );
}
